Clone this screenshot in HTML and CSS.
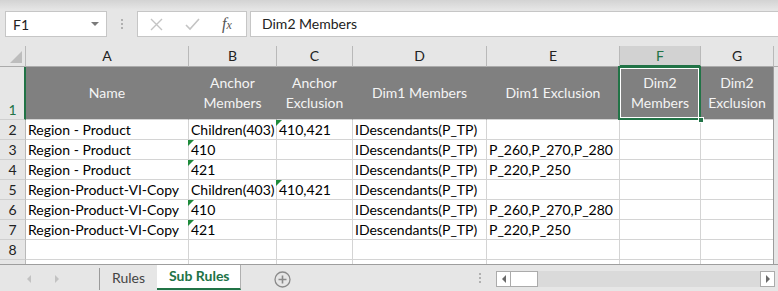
FILE: index.html
```html
<!DOCTYPE html>
<html lang="en">
<head>
    <meta charset="UTF-8">
    <title>Sub Rules</title>
    <link rel="stylesheet" href="styles.css">
</head>
<body>
    <div class="formula-bar">
        <div class="name-box">
            <span>F1</span>
            <span class="caret"></span>
        </div>
        <div class="grip"><i></i><i></i><i></i></div>
        <div class="fx-box">
            <svg class="fx-cancel" width="13" height="13" viewBox="0 0 13 13">
                <path d="M1 1 L12 12 M12 1 L1 12" stroke="#c4c4c4" stroke-width="1.4" fill="none"/>
            </svg>
            <svg class="fx-enter" width="15" height="13" viewBox="0 0 15 13">
                <path d="M1 7 L5 11 L14 1" stroke="#c4c4c4" stroke-width="1.6" fill="none"/>
            </svg>
            <span class="fx-label"><i>f</i><span>x</span></span>
        </div>
        <div class="formula-input">Dim2 Members</div>
    </div>

    <div class="sheet">
        <div class="row col-heads">
            <div class="corner"><span class="corner-tri"></span></div>
            <div class="ch">A</div>
            <div class="ch">B</div>
            <div class="ch">C</div>
            <div class="ch">D</div>
            <div class="ch">E</div>
            <div class="ch sel">F</div>
            <div class="ch last">G</div>
            <div class="gutter"></div>
        </div>

        <div class="row head-row">
            <div class="rh sel">1</div>
            <div class="hc">Name</div>
            <div class="hc">Anchor<br>Members</div>
            <div class="hc">Anchor<br>Exclusion</div>
            <div class="hc">Dim1 Members</div>
            <div class="hc">Dim1 Exclusion</div>
            <div class="hc active">Dim2<br>Members<span class="fill-handle"></span></div>
            <div class="hc last">Dim2<br>Exclusion</div>
            <div class="gutter"></div>
        </div>

        <div class="row">
            <div class="rh">2</div>
            <div class="c">Region - Product</div>
            <div class="c">Children(403)</div>
            <div class="c flag">410,421</div>
            <div class="c">IDescendants(P_TP)</div>
            <div class="c"></div>
            <div class="c"></div>
            <div class="c last"></div>
            <div class="gutter"></div>
        </div>
        <div class="row">
            <div class="rh">3</div>
            <div class="c">Region - Product</div>
            <div class="c flag">410</div>
            <div class="c"></div>
            <div class="c">IDescendants(P_TP)</div>
            <div class="c">P_260,P_270,P_280</div>
            <div class="c"></div>
            <div class="c last"></div>
            <div class="gutter"></div>
        </div>
        <div class="row">
            <div class="rh">4</div>
            <div class="c">Region - Product</div>
            <div class="c flag">421</div>
            <div class="c"></div>
            <div class="c">IDescendants(P_TP)</div>
            <div class="c">P_220,P_250</div>
            <div class="c"></div>
            <div class="c last"></div>
            <div class="gutter"></div>
        </div>
        <div class="row">
            <div class="rh">5</div>
            <div class="c">Region-Product-VI-Copy</div>
            <div class="c">Children(403)</div>
            <div class="c flag">410,421</div>
            <div class="c">IDescendants(P_TP)</div>
            <div class="c"></div>
            <div class="c"></div>
            <div class="c last"></div>
            <div class="gutter"></div>
        </div>
        <div class="row">
            <div class="rh">6</div>
            <div class="c">Region-Product-VI-Copy</div>
            <div class="c flag">410</div>
            <div class="c"></div>
            <div class="c">IDescendants(P_TP)</div>
            <div class="c">P_260,P_270,P_280</div>
            <div class="c"></div>
            <div class="c last"></div>
            <div class="gutter"></div>
        </div>
        <div class="row">
            <div class="rh">7</div>
            <div class="c">Region-Product-VI-Copy</div>
            <div class="c flag">421</div>
            <div class="c"></div>
            <div class="c">IDescendants(P_TP)</div>
            <div class="c">P_220,P_250</div>
            <div class="c"></div>
            <div class="c last"></div>
            <div class="gutter"></div>
        </div>
        <div class="row">
            <div class="rh">8</div>
            <div class="c"></div>
            <div class="c"></div>
            <div class="c"></div>
            <div class="c"></div>
            <div class="c"></div>
            <div class="c"></div>
            <div class="c last"></div>
            <div class="gutter"></div>
        </div>
        <div class="row">
            <div class="rh"></div>
            <div class="c"></div>
            <div class="c"></div>
            <div class="c"></div>
            <div class="c"></div>
            <div class="c"></div>
            <div class="c"></div>
            <div class="c last"></div>
            <div class="gutter"></div>
        </div>
    </div>

    <div class="tab-bar">
        <div class="tab-nav">
            <span class="arrow left"></span>
            <span class="arrow right"></span>
        </div>
        <div class="tab">Rules</div>
        <div class="tab current">Sub Rules</div>
        <svg class="add-sheet" width="17" height="17" viewBox="0 0 17 17">
            <circle cx="8.5" cy="8.5" r="7.5" stroke="#8a8a8a" stroke-width="1.3" fill="none"/>
            <path d="M8.5 4.5 V12.5 M4.5 8.5 H12.5" stroke="#8a8a8a" stroke-width="1.6"/>
        </svg>
        <div class="grip tab-grip"><i></i><i></i><i></i></div>
        <div class="hscroll">
            <span class="sb-btn"><span class="sb-arrow left"></span></span>
            <span class="sb-thumb"></span>
            <span class="sb-track"></span>
            <span class="sb-btn"><span class="sb-arrow right"></span></span>
        </div>
    </div>
</body>
</html>
```

FILE: styles.css
```css
* {
    margin: 0;
    padding: 0;
    box-sizing: border-box;
}

body {
    width: 778px;
    height: 291px;
    overflow: hidden;
    background: #e6e6e6;
    font-family: Lato, "Liberation Sans", sans-serif;
    font-size: 14px;
    color: #000;
}

/* formula bar */

.formula-bar {
    height: 46px;
    display: flex;
    align-items: flex-start;
    padding-top: 11px;
    background: linear-gradient(#d3d3d3 0, #e6e6e6 10px, #e6e6e6 100%);
}

.name-box {
    margin-left: 5px;
    width: 102px;
    height: 26px;
    background: #fff;
    border: 1px solid #c6c6c6;
    display: flex;
    align-items: center;
    justify-content: space-between;
    padding: 0 7px 0 7px;
    font-size: 14px;
    color: #222;
}

.caret {
    width: 0;
    height: 0;
    border-left: 4px solid transparent;
    border-right: 4px solid transparent;
    border-top: 4px solid #7a7a7a;
}

.grip {
    width: 2px;
    margin: 8px 14px 0 14px;
    display: flex;
    flex-direction: column;
    gap: 2px;
}

.grip i {
    width: 2px;
    height: 2px;
    background: #b0b0b0;
}

.fx-box {
    width: 110px;
    height: 26px;
    background: #fff;
    border: 1px solid #c6c6c6;
    display: flex;
    align-items: center;
}

.fx-cancel {
    margin-left: 12px;
}

.fx-enter {
    margin-left: 22px;
}

.fx-label {
    margin-left: 22px;
    font-family: "Liberation Serif", serif;
    color: #555;
    font-size: 16px;
}

.fx-label span {
    font-size: 12px;
    font-style: italic;
}

.formula-input {
    flex: 1;
    margin-left: 3px;
    height: 26px;
    background: #fff;
    border: 1px solid #c6c6c6;
    border-right: none;
    padding-left: 11px;
    line-height: 24px;
    font-size: 14px;
    color: #222;
}

/* sheet grid */

.sheet {
    height: 218px;
    overflow: hidden;
    background: #fff;
}

.row {
    display: grid;
    grid-template-columns: 26px 163px 88px 76px 134px 133px 81px 72px 1fr;
    height: 20px;
}

.row > div {
    border-right: 1px solid #d4d4d4;
    border-bottom: 1px solid #d4d4d4;
    white-space: nowrap;
    overflow: hidden;
}

.row > .last {
    border-right: none;
}

.row > .gutter {
    background: #e6e6e6;
    border-left: 1px solid #9c9c9c;
    border-right: none;
    border-bottom: none;
}

.col-heads {
    height: 21px;
    background: #e6e6e6;
}

.col-heads > div {
    border-right-color: #b9b9b9;
    border-bottom-color: #ababab;
}

.col-heads > .gutter {
    border-left: 1px solid #b9b9b9;
    border-bottom: 1px solid #ababab;
}

.ch {
    text-align: center;
    line-height: 20px;
    color: #222;
}

.ch.sel {
    background: #d2d2d2;
    color: #217346;
    border-bottom: 2px solid #217346 !important;
}

.corner {
    display: flex;
    justify-content: flex-end;
    align-items: flex-end;
    padding: 0 3px 3px 0;
}

.corner-tri {
    width: 0;
    height: 0;
    border-bottom: 12px solid #bdbdbd;
    border-left: 12px solid transparent;
}

.rh {
    background: #e6e6e6;
    text-align: center;
    line-height: 19px;
    color: #222;
    border-right-color: #b9b9b9 !important;
    border-bottom-color: #cfcfcf !important;
}

.head-row {
    height: 53px;
}

.head-row .rh.sel {
    display: flex;
    align-items: flex-end;
    justify-content: center;
    color: #217346;
    border-right: 2px solid #217346 !important;
    padding-left: 1px;
}

.hc {
    background: #808080;
    border-right-color: #808080 !important;
    color: #f4f4f4;
    display: flex;
    align-items: center;
    justify-content: center;
    text-align: center;
    line-height: 20px;
}

.hc.active {
    position: relative;
    overflow: visible !important;
}

.hc.active::after {
    content: '';
    position: absolute;
    top: -1px;
    left: -2px;
    right: -1px;
    bottom: -1px;
    border: 2px solid #217346;
    box-shadow: inset 0 0 0 1px #fff;
}

.fill-handle {
    position: absolute;
    right: -4px;
    bottom: -4px;
    width: 6px;
    height: 6px;
    background: #217346;
    border: 1px solid #fff;
    z-index: 2;
}

.c {
    padding-left: 2px;
    line-height: 19px;
}

.c.flag {
    position: relative;
    overflow: visible !important;
}

.c.flag::before {
    content: '';
    position: absolute;
    top: 0;
    left: -1px;
    width: 0;
    height: 0;
    border-top: 6px solid #1e8a3a;
    border-right: 6px solid transparent;
}

/* sheet tabs */

.tab-bar {
    height: 27px;
    border-top: 1px solid #9e9e9e;
    display: flex;
    align-items: flex-start;
    background: #e6e6e6;
}

.tab-nav {
    width: 100px;
    height: 22px;
    margin-top: 3px;
    display: flex;
    align-items: center;
    padding-left: 27px;
    gap: 24px;
    border-right: 1px solid #9a9a9a;
}

.arrow {
    width: 0;
    height: 0;
    border-top: 4px solid transparent;
    border-bottom: 4px solid transparent;
}

.arrow.left {
    border-right: 4px solid #c2c2c2;
}

.arrow.right {
    border-left: 4px solid #c2c2c2;
}

.tab {
    width: 57px;
    height: 24px;
    padding-left: 12px;
    line-height: 26px;
    color: #444;
}

.tab.current {
    width: 84px;
    height: 25px;
    padding-left: 12px;
    background: #fff;
    color: #217346;
    font-weight: bold;
    border-right: 1px solid #b0b0b0;
    border-bottom: 2px solid #217346;
    line-height: 22px;
}

.add-sheet {
    margin: 6px 0 0 33px;
}

.tab-grip {
    margin: 8px 0 0 188px;
}

.hscroll {
    margin: 6px 0 0 15px;
    width: 279px;
    height: 16px;
    display: flex;
    background: #dadada;
}

.sb-btn {
    width: 15px;
    height: 16px;
    background: #fff;
    border: 1px solid #ababab;
    display: flex;
    align-items: center;
    justify-content: center;
}

.sb-thumb {
    width: 27px;
    height: 16px;
    background: #fff;
    border: 1px solid #ababab;
    border-left: none;
}

.sb-track {
    flex: 1;
}

.sb-arrow {
    width: 0;
    height: 0;
    border-top: 4px solid transparent;
    border-bottom: 4px solid transparent;
}

.sb-arrow.left {
    border-right: 4px solid #6a6a6a;
}

.sb-arrow.right {
    border-left: 4px solid #6a6a6a;
}
```
